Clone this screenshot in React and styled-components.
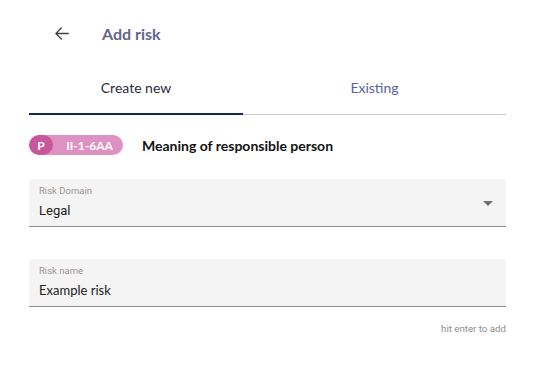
import styled, { createGlobalStyle } from 'styled-components';

const GlobalStyle = createGlobalStyle`
  body {
    margin: 0;
    background: #fff;
    font-family: Lato, "Open Sans", sans-serif;
  }
`;

export default function App() {
  return (
    <>
      <GlobalStyle />
      <Page>
        <Header>
          <BackButton aria-label="back">
            <svg width="14" height="13" viewBox="0 0 14 13" fill="none">
              <path
                d="M13.3 6.5H1.2M6.3 1L0.9 6.5L6.3 12"
                stroke="#444"
                strokeWidth="1.3"
                strokeLinecap="round"
                strokeLinejoin="round"
              />
            </svg>
          </BackButton>
          <Title>Add risk</Title>
        </Header>

        <Tabs>
          <Tab $active $width={214}>Create new</Tab>
          <Tab>Existing</Tab>
        </Tabs>

        <RuleRow>
          <Chip>
            <ChipLetter>P</ChipLetter>
            <ChipCode>II-1-6AA</ChipCode>
          </Chip>
          <RuleName>Meaning of responsible person</RuleName>
        </RuleRow>

        <Field $gap={24}>
          <Label>Risk Domain</Label>
          <Value $roboto>Legal</Value>
          <Caret />
        </Field>

        <Field $gap={32}>
          <Label>Risk name</Label>
          <Value>Example risk</Value>
        </Field>

        <Hint>hit enter to add</Hint>
      </Page>
    </>
  );
}

const Page = styled.div`
  width: 535px;
  padding: 0 29px;
  box-sizing: border-box;
`;

const Header = styled.div`
  display: flex;
  align-items: center;
  height: 66px;
  padding-left: 26px;
`;

const BackButton = styled.button`
  display: flex;
  align-items: center;
  justify-content: center;
  width: 14px;
  height: 14px;
  padding: 0;
  border: none;
  background: none;
  cursor: pointer;
  margin-right: 33px;
`;

const Title = styled.h1`
  margin: 0;
  font-size: 16px;
  font-weight: 700;
  color: #62678a;
`;

const Tabs = styled.div`
  display: flex;
  height: 48px;
  border-bottom: 1px solid #c6c6dc;
`;

const Tab = styled.div`
  flex: ${(p) => (p.$width ? `0 0 ${p.$width}px` : '1')};
  display: flex;
  align-items: center;
  justify-content: center;
  font-size: 14px;
  color: ${(p) => (p.$active ? '#2b2b3a' : '#5a5ea6')};
  box-shadow: ${(p) => (p.$active ? 'inset 0 -2px 0 #14285a' : 'none')};
  margin-bottom: -1px;
  padding-bottom: 6px;
`;

const RuleRow = styled.div`
  display: flex;
  align-items: center;
  margin-top: 20px;
  height: 20px;
`;

const Chip = styled.div`
  display: flex;
  align-items: center;
  height: 20px;
  width: 94px;
  border-radius: 10px;
  background: #de92c2;
  overflow: hidden;
`;

const ChipLetter = styled.span`
  display: flex;
  align-items: center;
  justify-content: center;
  width: 24px;
  height: 20px;
  border-radius: 10px;
  background: #c9559b;
  color: #fff;
  font-size: 12px;
  font-weight: 700;
`;

const ChipCode = styled.span`
  flex: 1;
  text-align: center;
  color: #fff;
  font-size: 12px;
  font-weight: 700;
  padding-left: 3px;
`;

const RuleName = styled.span`
  margin-left: 19px;
  font-size: 14px;
  font-weight: 700;
  color: #111;
`;

const Field = styled.div`
  position: relative;
  margin-top: ${(p) => p.$gap}px;
  background: #f4f4f4;
  border-radius: 4px 4px 0 0;
  border-bottom: 1px solid #8c8c8c;
  padding: 6px 10px 0;
  box-sizing: content-box;
  height: 41px;
`;

const Label = styled.div`
  font-family: Roboto, sans-serif;
  font-size: 9.5px;
  line-height: 12px;
  color: #a0918f;
`;

const Value = styled.div`
  margin-top: ${(p) => (p.$roboto ? 6 : 5)}px;
  font-family: ${(p) => (p.$roboto ? 'Roboto, sans-serif' : 'Lato, sans-serif')};
  font-size: 13px;
  line-height: 16px;
  color: #222;
`;

const Caret = styled.span`
  position: absolute;
  right: 13px;
  top: 22px;
  width: 0;
  height: 0;
  border-left: 5px solid transparent;
  border-right: 5px solid transparent;
  border-top: 5px solid #6e6e6e;
`;

const Hint = styled.div`
  margin-top: 16px;
  text-align: right;
  font-family: Roboto, sans-serif;
  font-size: 9.7px;
  color: #8c8c94;
`;
